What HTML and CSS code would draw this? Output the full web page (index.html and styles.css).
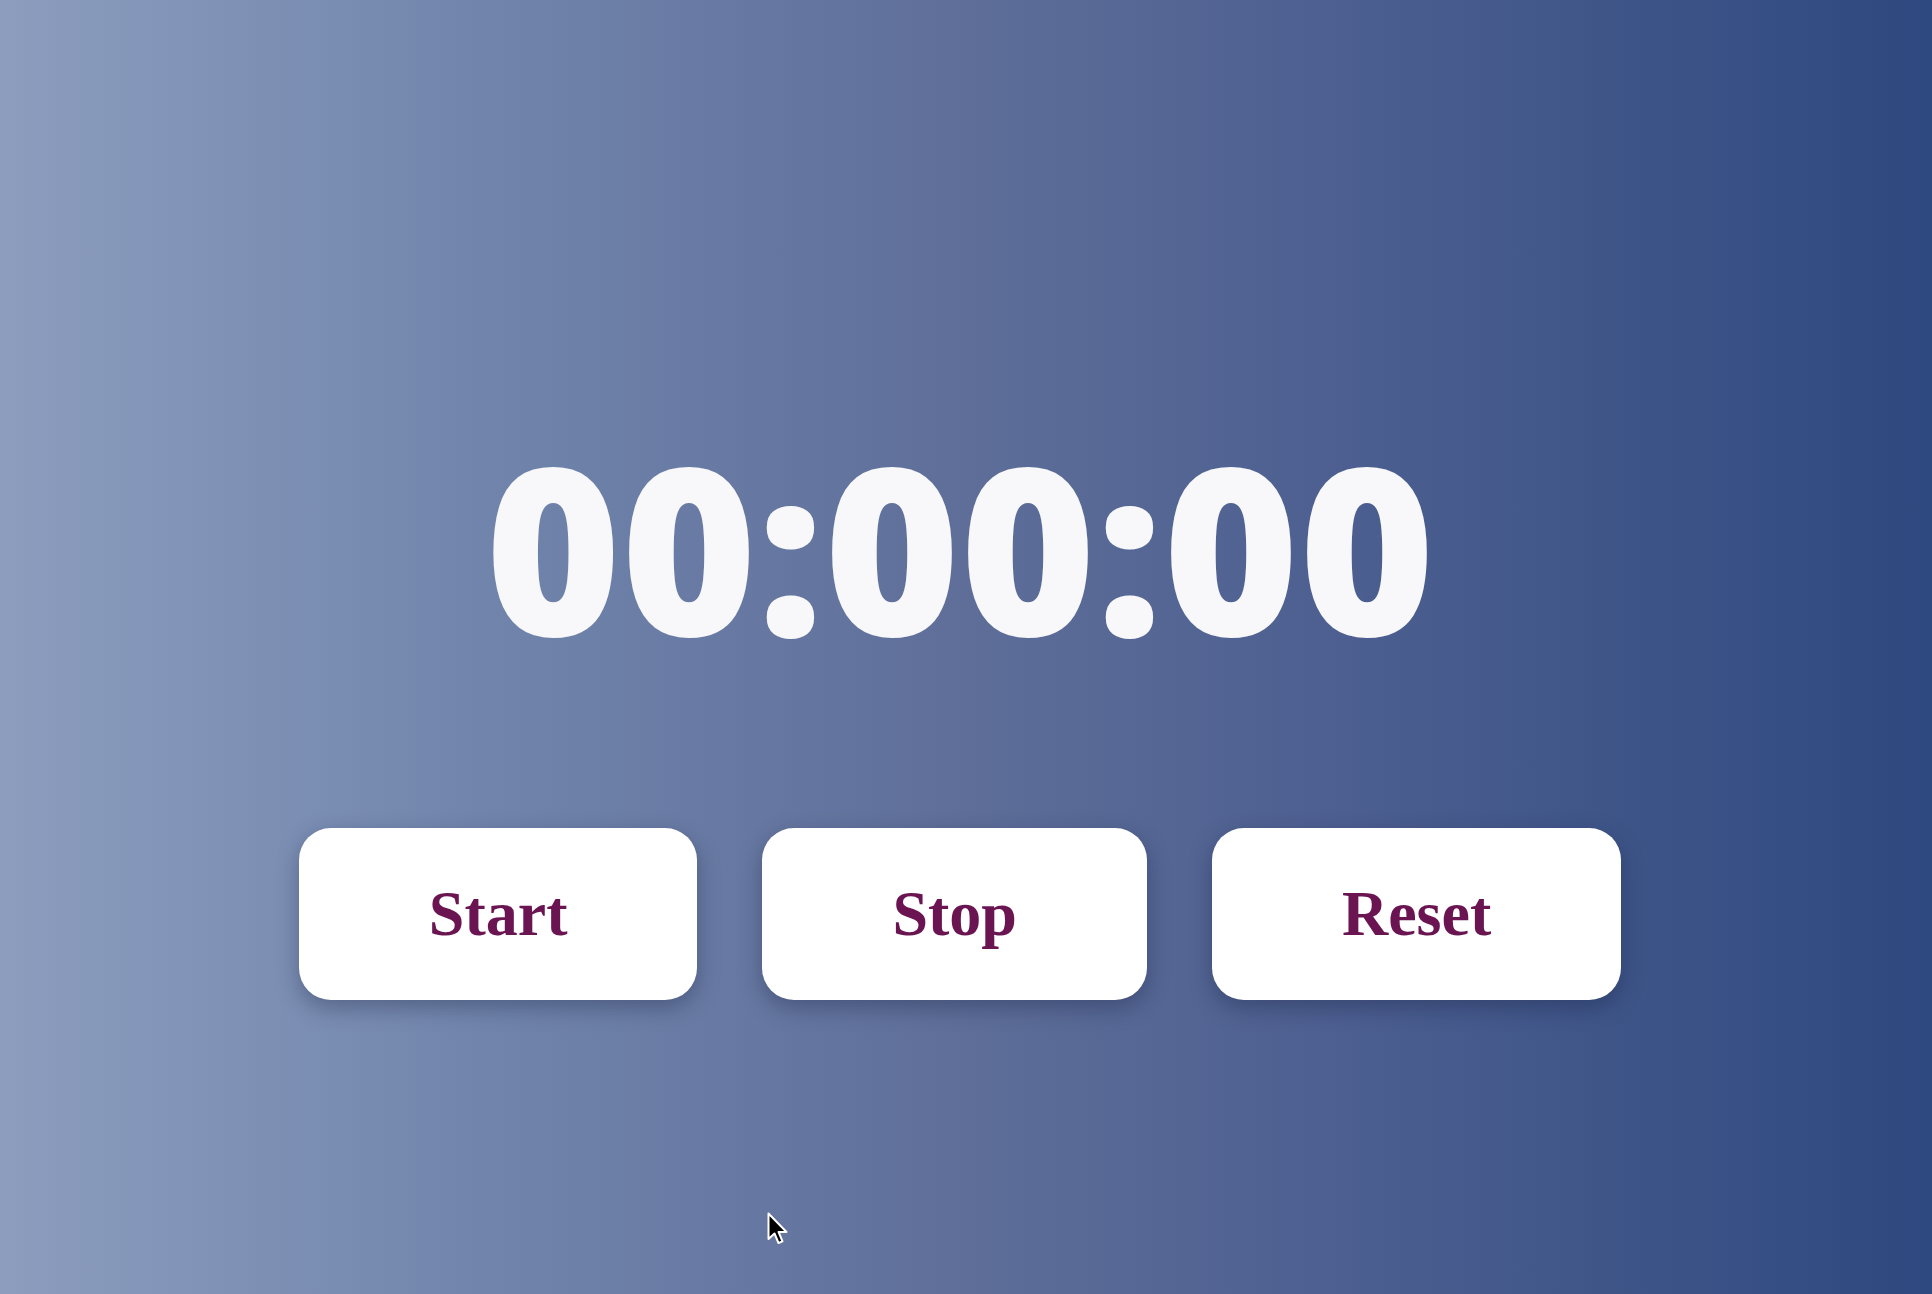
FILE: index.html
```html
<!DOCTYPE html>
<html lang="en">
<head>
<meta charset="utf-8">
<title>Stopwatch</title>
<link rel="stylesheet" href="styles.css">
</head>
<body>
<main class="stopwatch">
  <div class="display">00:00:00</div>
  <div class="controls">
    <button class="btn">Start</button>
    <button class="btn">Stop</button>
    <button class="btn">Reset</button>
  </div>
</main>
<svg class="cursor" width="24" height="36" viewBox="0 0 24 36">
  <path d="M1.5 1.5 L1.5 27 L7.5 21.5 L11.5 31 L15.5 29.3 L11.6 20 L19.5 20 Z" fill="#000" stroke="#fff" stroke-width="2" stroke-linejoin="round"/>
</svg>
</body>
</html>
```
FILE: styles.css
```css
html, body {
  margin: 0;
  padding: 0;
  height: 100%;
}
body {
  background: linear-gradient(to right, #8c9dbe 0%, #7185ac 25%, #5e6e99 50%, #4a5d8f 72%, #2e497f 100%);
  overflow: hidden;
  position: relative;
  font-family: "Open Sans", "Noto Sans", Roboto, Inter, Lato, sans-serif;
}
.stopwatch {
  display: flex;
  flex-direction: column;
  align-items: center;
  padding-top: 430px;
  padding-right: 12px;
  gap: 166px;
}
.display {
  font-family: "Open Sans", "Noto Sans", Roboto, Inter, sans-serif;
  font-weight: 800;
  font-size: 232px;
  line-height: 232px;
  color: #f8f8fa;
}
.controls {
  display: flex;
  gap: 65px;
}
.btn {
  font-family: "Liberation Serif", "Times New Roman", Tinos, Times, serif;
  font-weight: 700;
  font-size: 64px;
  line-height: 74px;
  color: #6a1452;
  background: #fff;
  border: none;
  border-radius: 32px;
  padding: 49px 130px;
  box-shadow: 0 8px 22px rgba(20, 30, 60, 0.35);
}
.cursor {
  position: absolute;
  left: 767px;
  top: 1212px;
}
```
